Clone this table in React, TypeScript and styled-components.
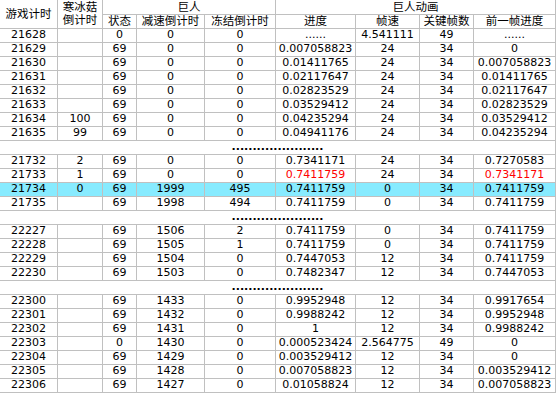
import React from "react";
import styled, { createGlobalStyle } from "styled-components";

type Row = (string | number)[] | null;

// null marks an elided stretch of frames
const rows: Row[] = [
  [21628, "", 0, 0, 0, "......", "4.541111", 49, "......"],
  [21629, "", 69, 0, 0, "0.007058823", 24, 34, 0],
  [21630, "", 69, 0, 0, "0.01411765", 24, 34, "0.007058823"],
  [21631, "", 69, 0, 0, "0.02117647", 24, 34, "0.01411765"],
  [21632, "", 69, 0, 0, "0.02823529", 24, 34, "0.02117647"],
  [21633, "", 69, 0, 0, "0.03529412", 24, 34, "0.02823529"],
  [21634, 100, 69, 0, 0, "0.04235294", 24, 34, "0.03529412"],
  [21635, 99, 69, 0, 0, "0.04941176", 24, 34, "0.04235294"],
  null,
  [21732, 2, 69, 0, 0, "0.7341171", 24, 34, "0.7270583"],
  [21733, 1, 69, 0, 0, "0.7411759", 24, 34, "0.7341171"],
  [21734, 0, 69, 1999, 495, "0.7411759", 0, 34, "0.7411759"],
  [21735, "", 69, 1998, 494, "0.7411759", 0, 34, "0.7411759"],
  null,
  [22227, "", 69, 1506, 2, "0.7411759", 0, 34, "0.7411759"],
  [22228, "", 69, 1505, 1, "0.7411759", 0, 34, "0.7411759"],
  [22229, "", 69, 1504, 0, "0.7447053", 12, 34, "0.7411759"],
  [22230, "", 69, 1503, 0, "0.7482347", 12, 34, "0.7447053"],
  null,
  [22300, "", 69, 1433, 0, "0.9952948", 12, 34, "0.9917654"],
  [22301, "", 69, 1432, 0, "0.9988242", 12, 34, "0.9952948"],
  [22302, "", 69, 1431, 0, 1, 12, 34, "0.9988242"],
  [22303, "", 0, 1430, 0, "0.000523424", "2.564775", 49, 0],
  [22304, "", 69, 1429, 0, "0.003529412", 12, 34, 0],
  [22305, "", 69, 1428, 0, "0.007058823", 12, 34, "0.003529412"],
  [22306, "", 69, 1427, 0, "0.01058824", 12, 34, "0.007058823"],
];

const HIGHLIGHT = 21734;
const RED_ROW = 21733;
const RED_COLS = [5, 8];

const GlobalStyle = createGlobalStyle`
  html, body {
    margin: 0;
    padding: 0;
    background: #fff;
  }
`;

const Sheet = styled.div`
  display: grid;
  grid-template-columns: 58px 45px 34px 68px 71px 80px 64px 54px 82px;
  grid-template-rows: 15px 14px;
  grid-auto-rows: 14px;
  width: 556px;
  font-family: "DejaVu Sans", "Noto Sans CJK SC", sans-serif;
  font-size: 11px;
  color: #000;
`;

const Cell = styled.div<{ $hl?: boolean; $red?: boolean }>`
  box-sizing: border-box;
  border-right: 1px solid #c0c0c0;
  border-bottom: 1px solid #c0c0c0;
  background: ${(p) => (p.$hl ? "#87ebff" : "#fff")};
  color: ${(p) => (p.$red ? "#ff0000" : "#000")};
  display: flex;
  align-items: flex-end;
  justify-content: center;
  line-height: 12px;
  padding-bottom: 1px;
  white-space: nowrap;
  overflow: visible;
`;

const Head = styled(Cell)<{ $col?: string; $row?: string }>`
  grid-column: ${(p) => p.$col ?? "auto"};
  grid-row: ${(p) => p.$row ?? "auto"};
  flex-direction: column;
  font-size: 11.5px;
  align-items: center;
  justify-content: center;
  padding-bottom: 0;
  line-height: 13px;
`;

const HeadLine = styled.span`
  display: block;
  line-height: 13px;
`;

const Gap = styled(Cell)`
  grid-column: 1 / -1;
  font-weight: bold;
`;

export default function App() {
  return (
    <>
      <GlobalStyle />
      <Sheet>
        <Head $col="1" $row="1 / 3">游戏计时</Head>
        <Head $col="2" $row="1 / 3">
          <HeadLine>寒冰菇</HeadLine>
          <HeadLine>倒计时</HeadLine>
        </Head>
        <Head $col="3 / 6" $row="1">巨人</Head>
        <Head $col="6 / 10" $row="1">巨人动画</Head>
        <Head $col="3" $row="2">状态</Head>
        <Head $col="4" $row="2">减速倒计时</Head>
        <Head $col="5" $row="2">冻结倒计时</Head>
        <Head $col="6" $row="2">进度</Head>
        <Head $col="7" $row="2">帧速</Head>
        <Head $col="8" $row="2">关键帧数</Head>
        <Head $col="9" $row="2">前一帧进度</Head>
        {rows.map((row, i) =>
          row === null ? (
            <Gap key={`gap-${i}`}>......................</Gap>
          ) : (
            row.map((v, c) => (
              <Cell
                key={`${row[0]}-${c}`}
                $hl={row[0] === HIGHLIGHT}
                $red={row[0] === RED_ROW && RED_COLS.includes(c)}
              >
                {v}
              </Cell>
            ))
          )
        )}
      </Sheet>
    </>
  );
}
